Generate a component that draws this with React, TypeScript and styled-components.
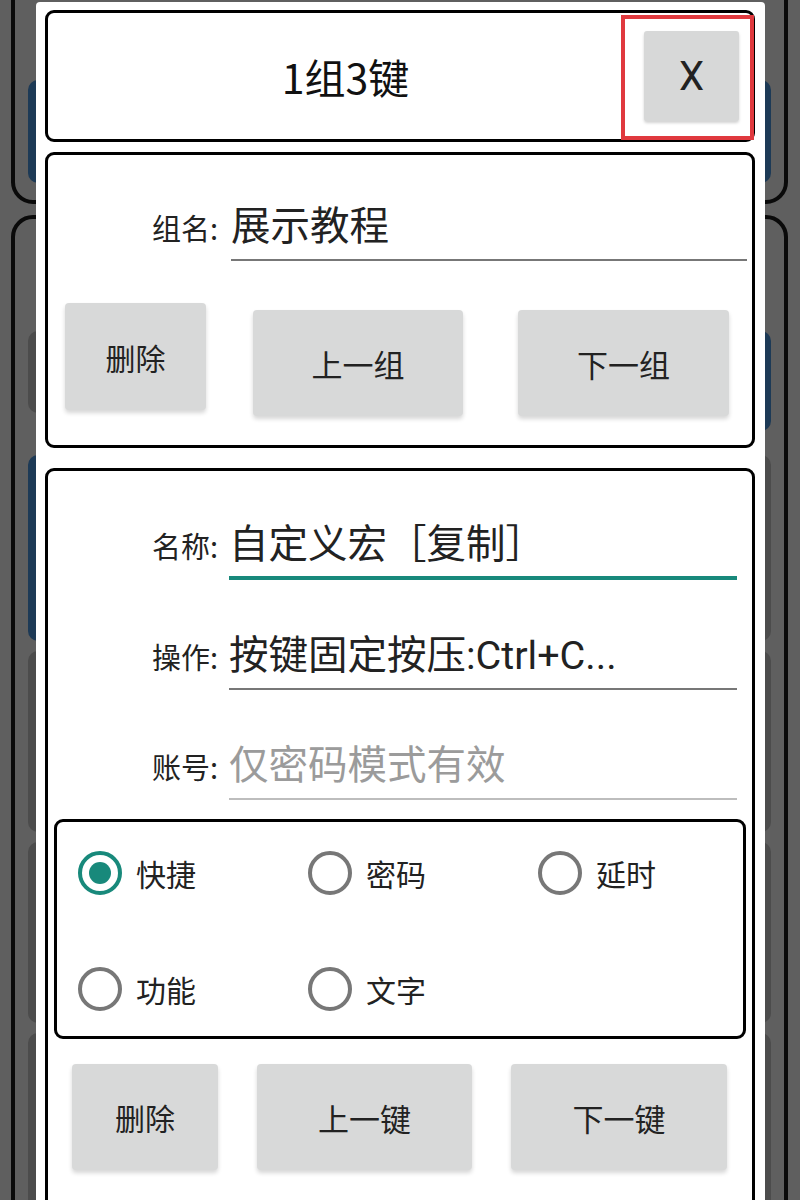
import React from "react";
import styled, { createGlobalStyle } from "styled-components";

const GlobalStyle = createGlobalStyle`
  html, body {
    margin: 0;
    padding: 0;
    background: #5f5f5f;
  }
  body {
    font-family: "Noto Sans CJK SC", "Noto Sans", sans-serif;
  }
`;

const Screen = styled.div`
  position: relative;
  width: 800px;
  height: 1200px;
  overflow: hidden;
  background: #5f5f5f;
`;

/* dimmed page behind the dialog */
const Backdrop = styled.div`
  display: flex;
  flex-direction: column;
  gap: 11px;
  padding: 0 12px 0 11px;
`;

const BackCard = styled.div<{ $top?: boolean }>`
  border: 4px solid #0a0a0a;
  border-radius: 22px;
  display: flex;
  flex-direction: column;
  ${(p) =>
    p.$top
      ? `margin-top: -40px; height: 219px; justify-content: flex-end; padding: 0 13px 17px 13px;`
      : `height: 1100px; padding: 112px 13px 0 13px;`}
`;

const TileGrid = styled.div`
  display: grid;
  grid-template-columns: 1fr 1fr;
  column-gap: 10px;
  row-gap: 10px;
  align-items: start;
`;

const Tile = styled.div<{ $tone: "blue" | "grey"; $h: number }>`
  height: ${(p) => p.$h}px;
  border-radius: 10px;
  background: ${(p) => (p.$tone === "blue" ? "#1d3a56" : "#4c4c4c")};
`;

const Dialog = styled.div`
  position: absolute;
  left: 36px;
  top: 2px;
  width: 729px;
  height: 1240px;
  background: #ffffff;
  border-radius: 4px;
  padding: 8px 10px 0 9px;
  box-sizing: border-box;
  display: flex;
  flex-direction: column;
`;

const Panel = styled.div<{ $mt?: number }>`
  border: 3px solid #000;
  border-radius: 9px;
  background: #fff;
  margin-top: ${(p) => p.$mt ?? 0}px;
  box-sizing: border-box;
`;

const Header = styled(Panel)`
  height: 132px;
  display: flex;
  align-items: center;
`;

const Title = styled.div`
  flex: 1;
  text-align: center;
  padding-left: 22px;
  font-size: 41px;
  color: #111;
`;

const CloseCell = styled.div`
  width: 133px;
  height: 125px;
  margin-right: -2px;
  margin-top: 3px;
  border: 4px solid #e0393e;
  box-sizing: border-box;
  display: flex;
  justify-content: flex-end;
  align-items: flex-start;
  padding: 12px 11px 0 0;
`;

const CloseButton = styled.div`
  width: 95px;
  height: 90px;
  background: #d7d8d8;
  border-radius: 3px;
  box-shadow: 0 2px 3px rgba(0, 0, 0, 0.18);
  display: flex;
  align-items: center;
  justify-content: center;
  font-family: Roboto, "Liberation Sans", sans-serif;
  font-size: 40px;
  color: #222;
`;

const GroupPanel = styled(Panel)`
  height: 296px;
  padding: 48px 5px 0 0;
`;

const KeyPanel = styled(Panel)`
  flex: 1;
  padding: 50px 15px 0 0;
`;

const Fields = styled.div`
  display: flex;
  flex-direction: column;
  gap: 52px;
`;

const FieldRow = styled.div<{ $gap?: number }>`
  display: flex;
  align-items: flex-start;
  gap: ${(p) => p.$gap ?? 12}px;
`;

const FieldLabel = styled.div`
  width: 170px;
  text-align: right;
  line-height: 48px;
  font-size: 29px;
  color: #222;
  white-space: nowrap;
`;

const InputBox = styled.div<{ $focus?: boolean; $empty?: boolean }>`
  flex: 1;
  height: ${(p) => (p.$focus ? 55 : 56)}px;
  line-height: 48px;
  font-family: Roboto, "Noto Sans CJK SC", sans-serif;
  font-size: 39.5px;
  color: ${(p) => (p.$empty ? "#9b9b9b" : "#222")};
  border-bottom: ${(p) =>
    p.$focus
      ? "4px solid #18897b"
      : p.$empty
      ? "2px solid #bdbdbd"
      : "2px solid #777"};
  white-space: nowrap;
`;

const ButtonRow = styled.div<{ $pl: number; $mt: number }>`
  display: flex;
  align-items: flex-start;
  padding-left: ${(p) => p.$pl}px;
  margin-top: ${(p) => p.$mt}px;
`;

const GreyButton = styled.div<{ $w: number; $h?: number; $ml?: number; $mt?: number; $size?: number }>`
  width: ${(p) => p.$w}px;
  height: ${(p) => p.$h ?? 106}px;
  margin-left: ${(p) => p.$ml ?? 0}px;
  margin-top: ${(p) => p.$mt ?? 0}px;
  background: #d8d9d9;
  border-radius: 4px;
  box-shadow: 0 3px 4px rgba(0, 0, 0, 0.16);
  display: flex;
  align-items: center;
  justify-content: center;
  font-size: ${(p) => p.$size ?? 31}px;
  color: #222;
`;

const RadioBox = styled.div`
  margin: 19px -9px 0 6px;
  height: 220px;
  border: 3px solid #000;
  border-radius: 9px;
  box-sizing: border-box;
  display: grid;
  grid-template-columns: repeat(3, 230px);
  row-gap: 72px;
  align-content: start;
  padding: 29px 0 0 21px;
`;

const RadioItem = styled.div`
  display: flex;
  align-items: center;
  height: 44px;
  gap: 14px;
  font-size: 30px;
  color: #222;
`;

const RadioCircle = styled.div<{ $on?: boolean }>`
  width: 44px;
  height: 44px;
  border-radius: 50%;
  box-sizing: border-box;
  border: 4px solid ${(p) => (p.$on ? "#18897b" : "#777")};
  display: flex;
  align-items: center;
  justify-content: center;
  &::after {
    content: "";
    width: 22px;
    height: 22px;
    border-radius: 50%;
    background: ${(p) => (p.$on ? "#18897b" : "transparent")};
  }
`;

const modes = [
  { label: "快捷", on: true },
  { label: "密码" },
  { label: "延时" },
  { label: "功能" },
  { label: "文字" },
];

export default function App() {
  return (
    <Screen>
      <GlobalStyle />
      <Backdrop>
        <BackCard $top>
          <Tile $tone="blue" $h={103} />
        </BackCard>
        <BackCard>
          <TileGrid>
            <Tile $tone="grey" $h={82} style={{ marginBottom: 14 }} />
            <Tile $tone="blue" $h={100} style={{ marginBottom: 14 }} />
            <Tile $tone="blue" $h={186} />
            <Tile $tone="grey" $h={186} />
            <Tile $tone="grey" $h={181} />
            <Tile $tone="grey" $h={181} />
            <Tile $tone="grey" $h={181} />
            <Tile $tone="grey" $h={181} />
            <Tile $tone="grey" $h={181} />
            <Tile $tone="grey" $h={181} />
          </TileGrid>
        </BackCard>
      </Backdrop>

      <Dialog>
        <Header>
          <Title>1组3键</Title>
          <CloseCell>
            <CloseButton>X</CloseButton>
          </CloseCell>
        </Header>

        <GroupPanel $mt={10}>
          <FieldRow $gap={13}>
            <FieldLabel>组名:</FieldLabel>
            <InputBox>展示教程</InputBox>
          </FieldRow>
          <ButtonRow $pl={17} $mt={42}>
            <GreyButton $w={141} $h={107} $size={30}>删除</GreyButton>
            <GreyButton $w={210} $ml={47} $mt={7}>上一组</GreyButton>
            <GreyButton $w={211} $ml={55} $mt={7}>下一组</GreyButton>
          </ButtonRow>
        </GroupPanel>

        <KeyPanel $mt={20}>
          <Fields>
            <FieldRow $gap={11}>
              <FieldLabel>名称:</FieldLabel>
              <InputBox $focus>自定义宏［复制］</InputBox>
            </FieldRow>
            <FieldRow $gap={11}>
              <FieldLabel>操作:</FieldLabel>
              <InputBox>按键固定按压:Ctrl+C...</InputBox>
            </FieldRow>
            <FieldRow $gap={11}>
              <FieldLabel>账号:</FieldLabel>
              <InputBox $empty>仅密码模式有效</InputBox>
            </FieldRow>
          </Fields>

          <RadioBox>
            {modes.map((m) => (
              <RadioItem key={m.label}>
                <RadioCircle $on={m.on} />
                {m.label}
              </RadioItem>
            ))}
          </RadioBox>

          <ButtonRow $pl={24} $mt={25}>
            <GreyButton $w={146} $size={30}>删除</GreyButton>
            <GreyButton $w={215} $ml={39}>上一键</GreyButton>
            <GreyButton $w={216} $ml={39}>下一键</GreyButton>
          </ButtonRow>
        </KeyPanel>
      </Dialog>
    </Screen>
  );
}
